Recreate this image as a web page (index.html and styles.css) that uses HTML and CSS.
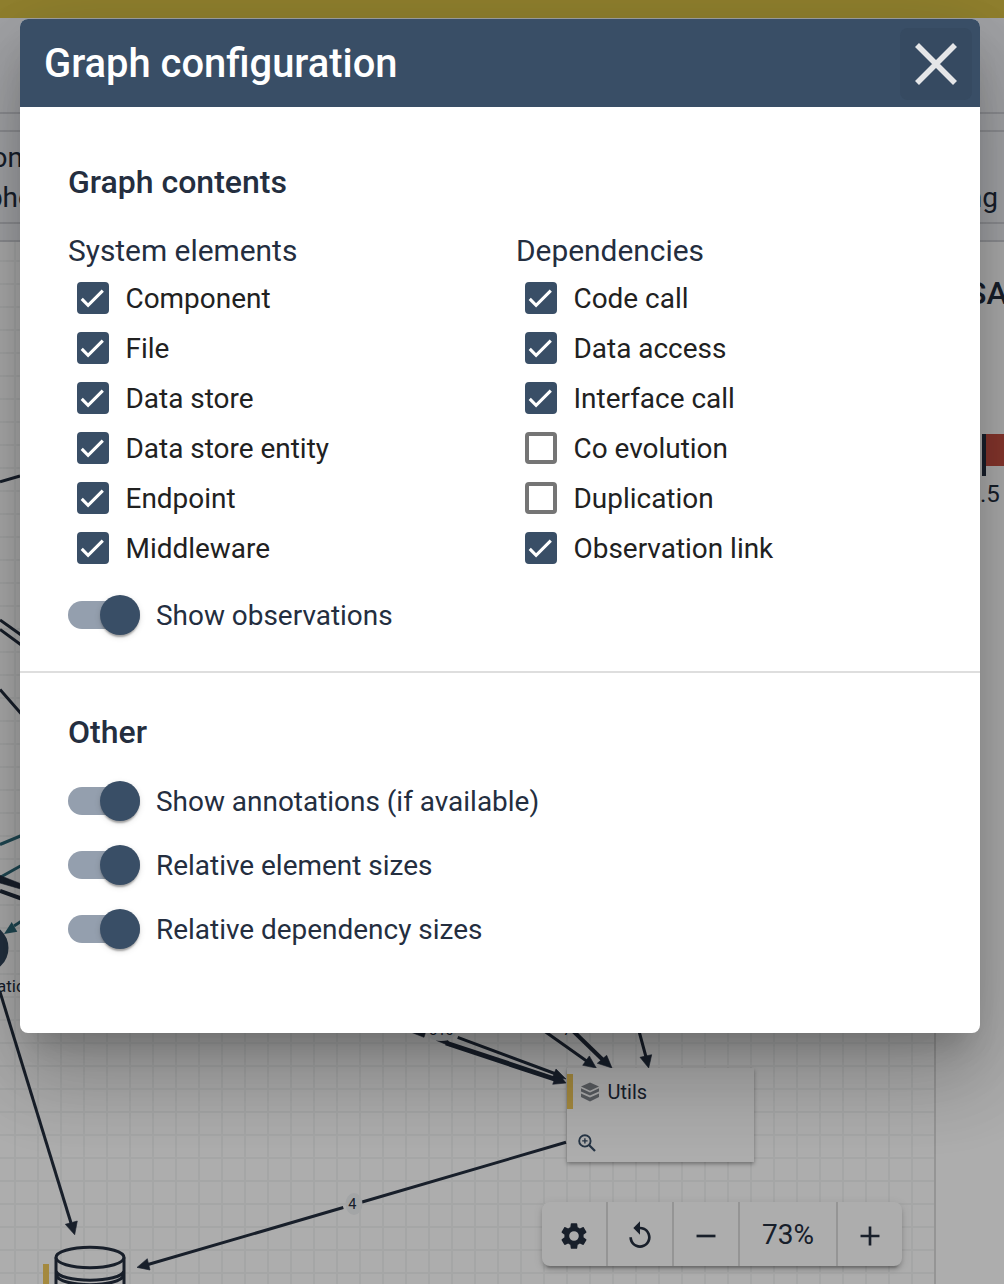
FILE: index.html
```html
<!DOCTYPE html>
<html lang="en">
<head>
<meta charset="utf-8">
<title>Graph configuration</title>
<link rel="stylesheet" href="styles.css">
</head>
<body>
<main class="app">
  <div class="brand-bar"></div>
  <div class="nav-bar"></div>
  <div class="gap-row"></div>
  <div class="tabs">
    <div class="tabs-left"><span>on</span><span>pho</span></div>
    <div class="tabs-right">ng</div>
  </div>
  <div class="gap-row"></div>
  <div class="workspace">
    <div class="canvas"></div>
    <aside class="side">
      <h2 class="side-title">SA</h2>
      <div class="meter"><i class="meter-mark"></i><i class="meter-fill"></i></div>
      <span class="meter-value">.5</span>
    </aside>
  </div>
</main>

<svg class="diagram" viewBox="0 0 1004 1284" width="1004" height="1284">
  <g class="edge">
    <path d="M0 481.7L20 476M0 620L24 637M0 629.5L24 647M0 689.5L24 717"/>
    <path d="M0 891L24 899.500" stroke-width="4"/>
    <path d="M0 992L71 1223"/>
    <path d="M148 1264.5L343.3 1207.5M361.3 1202.3L566 1142.3"/>
    <path d="M457.7 1037.3L556 1074M540 1028L588 1062M636 1020L646 1057"/>
    <path d="M570 1028L603 1060" stroke-width="4"/>
    <path d="M446 1043L556 1079.5" stroke-width="5"/>
  </g>
  <g class="edge teal">
    <path d="M0 844.5L24 834.5M0 877.5L24 864M14 926L24 919.5"/>
  </g>
  <path class="teal-head" d="M4 934L11.7 922L17.3 931.7Z"/>
  <g class="heads">
    <path d="M0 875.5L24 885V890L0 883Z"/>
    <path d="M74.7 1234.8L65.3 1224.3L77.3 1221Z"/>
    <path d="M137 1267.4L147.3 1258.7L150 1270Z"/>
    <path d="M566 1083L557.3 1072L552.7 1084.3Z"/>
    <path d="M566 1079L556 1069L552.7 1077Z"/>
    <path d="M408 1031L426 1031L424 1037.3Z"/>
    <path d="M436.5 1040.5L448 1040.5L450 1046Z"/>
    <path d="M596.3 1068L589.3 1056L582.7 1065.3Z"/>
    <path d="M612 1068L606.7 1055.3L597.3 1063.3Z"/>
    <path d="M648.7 1068L640 1057.3L651.7 1054.7Z"/>
  </g>
  <circle class="node" cx="-16" cy="948" r="24.5"/>
  <text x="-3" y="991.7" font-size="17">atic</text>
  <ellipse class="badge" cx="354" cy="1204" rx="8.500" ry="11"/>
  <text x="352.3" y="1209" font-size="14.5" text-anchor="middle">4</text>
  <ellipse class="badge" cx="441" cy="1030" rx="16" ry="11"/>
  <text x="441.5" y="1035.2" font-size="14.5" text-anchor="middle">310</text>
  <text x="567" y="1035" font-size="14.5" text-anchor="middle">7</text>
  <rect class="amber" x="43" y="1264" width="6" height="24"/>
  <g class="store">
    <ellipse cx="90" cy="1257.5" rx="34" ry="10.2"/>
    <path d="M56 1257.5V1284M124 1257.5V1284M56 1270.5C58 1283.5 122 1283.5 124 1270.5M56 1275C60 1288 120 1288 124 1275"/>
  </g>
</svg>

<div class="utils-card">
  <div class="utils-head">
    <svg width="20" height="20" viewBox="0 0 20 20" fill="#84888e"><path d="M10 .5L19 4.4L10 8.700L1 4.400Z"/><path d="M1 6.200l9 4.200 9-4.200v3.200l-9 4.200-9-4.200Z"/><path d="M1 11.400l9 4.200 9-4.200v3.600l-9 4.500-9-4.500Z"/></svg>
    <span>Utils</span>
  </div>
  <svg class="zoom-icon" width="18" height="18" viewBox="0 0 18 18" fill="none" stroke="#394e66" stroke-width="1.900"><circle cx="6.900" cy="6.900" r="5.700"/><path d="M11 11l6 6" stroke-width="2.300"/><path d="M4.200 6.900h5.400M6.900 4.200v5.400" stroke-width="1.400"/></svg>
</div>

<div class="toolbar">
  <div class="tool"><svg width="32" height="32" viewBox="0 0 24 24" fill="#242e3f"><path d="M19.140 12.940c.040-.300.060-.610.060-.940 0-.320-.020-.640-.070-.940l2.030-1.580c.180-.140.230-.410.120-.610l-1.920-3.320c-.120-.220-.370-.290-.590-.220l-2.390.960c-.500-.380-1.030-.700-1.620-.940l-.360-2.540c-.040-.240-.240-.410-.480-.410h-3.840c-.240 0-.430.170-.470.410l-.360 2.540c-.590.240-1.130.570-1.620.940l-2.390-.960c-.220-.080-.470 0-.590.220L2.740 8.870c-.120.210-.080.470.120.610l2.030 1.580c-.050.300-.090.630-.090.940s.020.640.070.940l-2.030 1.580c-.180.140-.230.410-.120.610l1.920 3.320c.120.220.370.290.590.220l2.390-.960c.500.380 1.030.700 1.620.940l.360 2.540c.050.240.240.410.480.410h3.840c.240 0 .440-.170.470-.410l.360-2.540c.590-.240 1.130-.560 1.620-.940l2.390.960c.220.080.470 0 .590-.220l1.920-3.320c.120-.220.070-.470-.120-.610l-2.010-1.580zM12 15.600A3.600 3.600 0 1 1 12 8.400a3.600 3.600 0 0 1 0 7.200z"/></svg></div>
  <div class="tool"><svg width="32" height="32" viewBox="0 0 24 24" fill="#242e3f"><path d="M12 5V1L7 6l5 5V7c3.310 0 6 2.690 6 6s-2.690 6-6 6-6-2.690-6-6H4c0 4.420 3.580 8 8 8s8-3.580 8-8-3.580-8-8-8z"/></svg></div>
  <div class="tool"><svg width="32" height="32" viewBox="0 0 24 24" fill="#242e3f"><path d="M4.900 11h14.200v2H4.900z"/></svg></div>
  <div class="tool level">73%</div>
  <div class="tool"><svg width="32" height="32" viewBox="0 0 24 24" fill="#242e3f"><path d="M4.900 11H11V4.900h2V11h6.100v2H13v6.100h-2V13H4.900z"/></svg></div>
</div>

<div class="backdrop"></div>

<section class="dialog">
  <header class="dialog-head">
    <h1>Graph configuration</h1>
    <button class="close" aria-label="Close"><svg width="48" height="48" viewBox="0 0 48 48" stroke="#e5e6e8" stroke-width="5.600"><path d="M5 5l38 38M43 5l-38 38"/></svg></button>
  </header>
  <div class="section contents">
    <h2>Graph contents</h2>
    <div class="columns">
      <div class="column">
        <h3>System elements</h3>
        <div class="check on"><i><svg viewBox="0 0 24 24"><path d="M1.730 12.910L8.100 19.280 22.790 4.590"/></svg></i><span>Component</span></div>
        <div class="check on"><i><svg viewBox="0 0 24 24"><path d="M1.730 12.910L8.100 19.280 22.790 4.590"/></svg></i><span>File</span></div>
        <div class="check on"><i><svg viewBox="0 0 24 24"><path d="M1.730 12.910L8.100 19.280 22.790 4.590"/></svg></i><span>Data store</span></div>
        <div class="check on"><i><svg viewBox="0 0 24 24"><path d="M1.730 12.910L8.100 19.280 22.790 4.590"/></svg></i><span>Data store entity</span></div>
        <div class="check on"><i><svg viewBox="0 0 24 24"><path d="M1.730 12.910L8.100 19.280 22.790 4.590"/></svg></i><span>Endpoint</span></div>
        <div class="check on"><i><svg viewBox="0 0 24 24"><path d="M1.730 12.910L8.100 19.280 22.790 4.590"/></svg></i><span>Middleware</span></div>
      </div>
      <div class="column">
        <h3>Dependencies</h3>
        <div class="check on"><i><svg viewBox="0 0 24 24"><path d="M1.730 12.910L8.100 19.280 22.790 4.590"/></svg></i><span>Code call</span></div>
        <div class="check on"><i><svg viewBox="0 0 24 24"><path d="M1.730 12.910L8.100 19.280 22.790 4.590"/></svg></i><span>Data access</span></div>
        <div class="check on"><i><svg viewBox="0 0 24 24"><path d="M1.730 12.910L8.100 19.280 22.790 4.590"/></svg></i><span>Interface call</span></div>
        <div class="check"><i></i><span>Co evolution</span></div>
        <div class="check"><i></i><span>Duplication</span></div>
        <div class="check on"><i><svg viewBox="0 0 24 24"><path d="M1.730 12.910L8.100 19.280 22.790 4.590"/></svg></i><span>Observation link</span></div>
      </div>
    </div>
    <div class="toggle"><i></i><span>Show observations</span></div>
  </div>
  <div class="section other">
    <h2>Other</h2>
    <div class="toggles">
      <div class="toggle"><i></i><span>Show annotations (if available)</span></div>
      <div class="toggle"><i></i><span>Relative element sizes</span></div>
      <div class="toggle"><i></i><span>Relative dependency sizes</span></div>
    </div>
  </div>
</section>
</body>
</html>
```
FILE: styles.css
```css
* { box-sizing: border-box; }
body {
  margin: 0;
  width: 1004px;
  height: 1284px;
  overflow: hidden;
  position: relative;
  font-family: Roboto, "Liberation Sans", sans-serif;
  color: #242e3f;
}
h1, h2, h3 { margin: 0; }
svg { display: block; }

/* page behind the dialog */
.app { height: 1284px; display: flex; flex-direction: column; background: #f0f2f7; }
.brand-bar { height: 18px; background: #d6be45; }
.nav-bar { height: 96px; border-bottom: 2px solid #d0d2d7; }
.gap-row { height: 18px; border-bottom: 2px solid #d0d2d7; }
.tabs {
  height: 92px;
  display: flex;
  justify-content: space-between;
  border-bottom: 2px solid #d0d2d7;
  font-size: 28px;
  line-height: 40px;
}
.tabs-left { width: 34px; padding-top: 6px; display: flex; flex-direction: column; align-items: flex-end; }
.tabs-left span:first-child { padding-right: 11px; }
.tabs-right { padding: 46px 6px 0 0; }
.workspace { flex: 1; display: flex; background: #fff; }
.canvas {
  width: 936px;
  border-right: 2px solid #dcdcdc;
  background:
    linear-gradient(#f4f5f5 2px, transparent 2px) 0 18px / 23px 23px,
    linear-gradient(90deg, #f4f5f5 2px, transparent 2px) 14px 0 / 23px 23px;
}
.side { width: 68px; padding-left: 36px; overflow: hidden; }
.side-title { margin: 31px 0 0 -5px; height: 41px; font-size: 32px; line-height: 40px; font-weight: 500; }
.meter { margin: 120px 0 0 10px; display: flex; width: 22px; }
.meter-mark { width: 4px; height: 42px; background: #242e3f; }
.meter-fill { width: 18px; height: 32px; background: #c65043; }
.meter-value { display: block; margin-left: 8px; font-size: 24px; line-height: 36px; }

.diagram { position: absolute; left: 0; top: 0; }
.diagram text { fill: #242e3f; }
.edge { fill: none; stroke: #242e3f; stroke-width: 3; }
.edge.teal { stroke: #2f6b7b; }
.teal-head { fill: #2f6b7b; }
.heads { fill: #242e3f; stroke: #242e3f; stroke-width: .6; }
.node { fill: #33475e; }
.badge { fill: #f1f3f5; }
.amber { fill: #f2ca5c; }
.store { fill: none; stroke: #242e3f; stroke-width: 3; }

.utils-card {
  position: absolute;
  left: 567px;
  top: 1068px;
  width: 187px;
  height: 94px;
  background: #fff;
  box-shadow: 0 2px 4px rgba(0, 0, 0, .35);
}
.utils-head {
  margin: 6px 0 0 -.5px;
  height: 35px;
  border-left: 6px solid #f2ca5c;
  padding-left: 7px;
  display: flex;
  align-items: center;
  gap: 8px;
  font-size: 20px;
}
.zoom-icon { margin: 25px 0 0 11px; }

.toolbar {
  position: absolute;
  left: 542px;
  top: 1202px;
  height: 64px;
  display: flex;
  border-radius: 8px;
  background: #fff;
  box-shadow: 0 6px 2px -4px rgba(0, 0, 0, .2), 0 4px 4px rgba(0, 0, 0, .14), 0 2px 10px rgba(0, 0, 0, .12);
}
.tool { width: 66px; display: flex; align-items: center; justify-content: center; border-right: 2px solid #dcdcdc; padding-top: 4px; }
.tool:last-child { width: 64px; border-right: 0; }
.tool.level { width: 98px; font-size: 28px; padding-top: 0; }

.backdrop { position: absolute; inset: 0; background: rgba(0, 0, 0, .32); }

/* dialog */
.dialog {
  position: absolute;
  left: 20px;
  top: 19px;
  width: 960px;
  height: 1014px;
  border-radius: 8px;
  overflow: hidden;
  background: #fff;
  box-shadow: 0 22px 30px -14px rgba(0, 0, 0, .2), 0 48px 76px 6px rgba(0, 0, 0, .14), 0 18px 92px 16px rgba(0, 0, 0, .12);
}
.dialog-head {
  height: 88px;
  padding: 2px 8px 0 24px;
  display: flex;
  align-items: center;
  justify-content: space-between;
  background: #394e66;
  color: #fff;
}
.dialog-head h1 { font-size: 39.9px; font-weight: 500; line-height: 64px; }
.close {
  width: 72px;
  height: 72px;
  border: 0;
  border-radius: 8px;
  padding: 0;
  display: flex;
  align-items: center;
  justify-content: center;
  background: #364a61;
}
.section { padding: 0 48px; }
.section h2 { font-size: 32px; font-weight: 500; line-height: 40px; }
.contents { height: 566px; padding-top: 55px; border-bottom: 2px solid #dedede; }
.columns { display: flex; margin-top: 29px; }
.column { flex: none; width: 448px; }
.column h3 { font-size: 29.9px; font-weight: 400; line-height: 40px; height: 42px; }
.check { height: 50px; padding-left: 9px; display: flex; align-items: center; gap: 16.5px; font-size: 27.95px; color: #212121; }
.check i { width: 32px; height: 32px; border: 4px solid #757575; border-radius: 4px; }
.check.on i { border-color: #394e66; background: #394e66; }
.check svg { width: 24px; height: 24px; margin-left: -1px; fill: none; stroke: #fff; stroke-width: 3.1; }
.toggle { height: 40px; display: flex; align-items: center; gap: 16px; font-size: 27.95px; }
.toggle i { width: 72px; height: 28px; border-radius: 14px; background: #949fae; display: flex; justify-content: flex-end; align-items: center; }
.toggle i::after {
  content: "";
  flex: none;
  width: 40px;
  height: 40px;
  border-radius: 50%;
  background: #394e66;
  box-shadow: 0 4px 2px -2px rgba(0, 0, 0, .2), 0 2px 2px rgba(0, 0, 0, .14), 0 2px 6px rgba(0, 0, 0, .12);
}
.contents .toggle { margin-top: 22px; }
.other { padding-top: 39px; }
.toggles { margin-top: 29px; display: flex; flex-direction: column; gap: 24px; }
```
